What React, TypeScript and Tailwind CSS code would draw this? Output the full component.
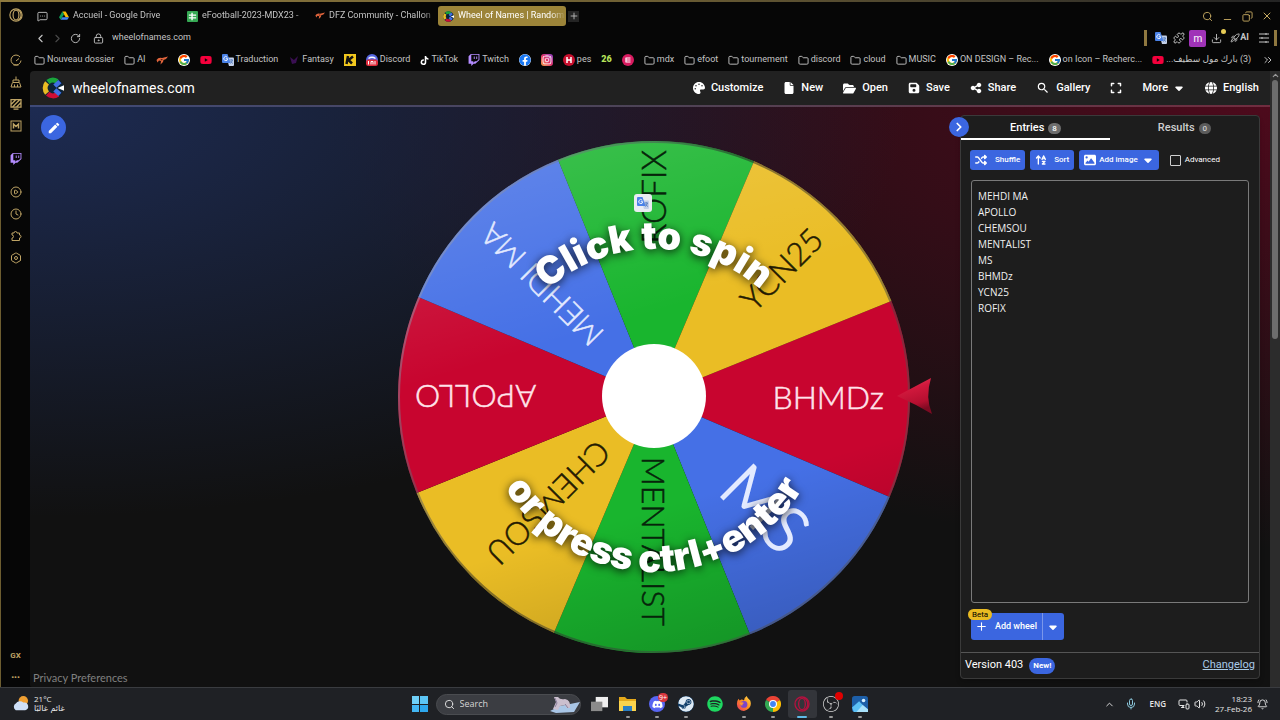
import type { ReactNode } from 'react'
import { FaArrowUpAZ, FaCaretDown, FaExpand, FaFile, FaFloppyDisk, FaFolderOpen, FaGlobe, FaImage, FaPalette, FaShareNodes, FaShuffle } from 'react-icons/fa6'
import { FaDiscord, FaFacebook, FaInstagram, FaSpotify, FaSteam, FaTiktok, FaTwitch, FaYoutube } from 'react-icons/fa'
import { FcGoogle } from 'react-icons/fc'
import { SiObsstudio } from 'react-icons/si'
import { MdEdit, MdSearch } from 'react-icons/md'
import {
  BellRing, ChevronLeft, ChevronRight, ChevronUp, ChevronsRight, CirclePlay, Clock, Copy, Download, Folder, Hexagon,
  LockKeyhole, MessageSquareMore, Mic, Minus, MonitorSmartphone, Plus, Puzzle, Rocket, RotateCw, Search, Volume2, X,
} from 'lucide-react'

const names = ['MEHDI MA', 'APOLLO', 'CHEMSOU', 'MENTALIST', 'MS', 'BHMDz', 'YCN25', 'ROFIX']

interface Slice {
  name: string
  angle: number
  fill: string
  ink: string
  size: number
  end: number
}

const slices: Slice[] = [
  { name: 'BHMDz', angle: 0, fill: '#c8052f', ink: '#ffe4ea', size: 32, end: 230 },
  { name: 'MS', angle: 45, fill: '#4570e6', ink: '#e3eaff', size: 64, end: 204 },
  { name: 'MENTALIST', angle: 90, fill: '#19b52e', ink: '#06240a', size: 32, end: 229 },
  { name: 'CHEMSOU', angle: 135, fill: '#eabd25', ink: '#241b02', size: 32, end: 229 },
  { name: 'APOLLO', angle: 180, fill: '#c8052f', ink: '#ffe4ea', size: 32, end: 239 },
  { name: 'MEHDI MA', angle: 225, fill: '#4570e6', ink: '#e3eaff', size: 31, end: 238 },
  { name: 'ROFIX', angle: 270, fill: '#19b52e', ink: '#06240a', size: 33, end: 247 },
  { name: 'YCN25', angle: 315, fill: '#eabd25', ink: '#241b02', size: 32, end: 231 },
]

function slicePath(angle: number, r: number) {
  const a = ((angle - 22) * Math.PI) / 180
  const b = ((angle + 23) * Math.PI) / 180
  return `M0 0 L${r * Math.cos(a)} ${r * Math.sin(a)} A${r} ${r} 0 0 1 ${r * Math.cos(b)} ${r * Math.sin(b)} Z`
}

function Wheel() {
  return (
    <svg viewBox="-290 -290 580 580" className="block w-[580px] h-[580px]" role="img" aria-label="Wheel">
      <defs>
        <linearGradient id="shade" x1="0.35" y1="0" x2="0.65" y2="1">
          <stop offset="0" stopColor="#fff" stopOpacity="0.14" />
          <stop offset="0.35" stopColor="#fff" stopOpacity="0" />
          <stop offset="0.7" stopColor="#000" stopOpacity="0" />
          <stop offset="1" stopColor="#000" stopOpacity="0.18" />
        </linearGradient>
        <linearGradient id="rim" x1="0" y1="0" x2="1" y2="0.6">
          <stop offset="0" stopColor="#c9d3ee" stopOpacity="0.5" />
          <stop offset="0.5" stopColor="#222" stopOpacity="0.5" />
          <stop offset="1" stopColor="#555" stopOpacity="0.5" />
        </linearGradient>
        <linearGradient id="pointer" x1="0" y1="0" x2="0.3" y2="1">
          <stop offset="0" stopColor="#e8405f" />
          <stop offset="0.4" stopColor="#d0183c" />
          <stop offset="0.8" stopColor="#b50f30" />
          <stop offset="1" stopColor="#7d0a22" />
        </linearGradient>
        <path id="arcTop" d="M-160 12 A160 160 0 0 1 160 12" />
        <path id="arcBottom" d="M-174 1 A174 174 0 0 0 174 1" />
      </defs>

      {slices.map(s => <path key={s.name} d={slicePath(s.angle, 256)} fill={s.fill} />)}
      <circle r="256" fill="url(#shade)" />
      <circle r="255" fill="none" stroke="url(#rim)" strokeWidth="2" />
      {slices.map(s => (
        <text
          key={s.name}
          transform={`rotate(${s.angle})`}
          x={s.end}
          y={s.size * 0.36}
          fontSize={s.size}
          fill={s.ink}
          stroke={s.ink}
          strokeWidth={s.size > 60 ? 2 : 0.5}
          textAnchor="end"
          className="font-['Lato'] font-light"
        >
          {s.name}
        </text>
      ))}
      <circle r="52" cy="-1" fill="#fff" />
      <path d="M243 -1 L277 -19 Q271 0 278 17 L262 8 Z" fill="url(#pointer)" />

      <g className="font-['Inter'] font-black text-[38px] drop-shadow-[0_2px_5px_rgba(0,0,0,0.8)]" fill="#fff" textAnchor="middle">
        <text><textPath href="#arcTop" startOffset="50%">Click to spin</textPath></text>
        <text><textPath href="#arcBottom" startOffset="50%">or press ctrl+enter</textPath></text>
      </g>
    </svg>
  )
}

function OperaRing({ className }: { className?: string }) {
  return (
    <svg viewBox="0 0 24 24" className={className} fill="none" stroke="currentColor" strokeWidth="2">
      <circle cx="12" cy="12" r="10.5" />
      <ellipse cx="12" cy="12" rx="5" ry="8.5" />
      <path d="M15 3 A10 10 0 0 1 15 21" />
    </svg>
  )
}

function WheelLogo({ className }: { className?: string }) {
  return (
    <svg viewBox="0 0 24 24" className={className} fill="none" strokeWidth="5.500">
      <circle cx="12" cy="12" r="11.5" fill="#0c2337" />
      <path d="M6.5 5.5 A8.5 8.5 0 0 1 16.5 4.8" stroke="#1ba53a" />
      <path d="M5.5 17.500 A8.5 8.5 0 0 1 5.5 6.500" stroke="#e8bb22" />
      <path d="M17 19 A8.5 8.5 0 0 1 6.2 18.2" stroke="#cf0d35" />
      <path d="M14 10 L19.500 5 M14 14 L19.500 19" stroke="#3f6fe4" strokeWidth="5" />
      <path d="M17 12 L24 9 V15 Z" fill="#fff" />
    </svg>
  )
}

function Drive({ className }: { className?: string }) {
  return (
    <svg viewBox="0 0 24 22" className={className}>
      <path d="M8 1 h8 l8 14 h-8 z" fill="#fbbc05" />
      <path d="M8 1 L0 15 l4 6 8 -13 z" fill="#0f9d58" />
      <path d="M8 15 h16 l-4 6 H4 z" fill="#4285f4" />
    </svg>
  )
}

function Sheet({ className }: { className?: string }) {
  return (
    <svg viewBox="0 0 24 24" className={className}>
      <rect width="24" height="24" rx="2" fill="#35a853" />
      <path d="M4 9 H20 M4 15 H20 M11 4 V20" stroke="#fff" strokeWidth="3" />
    </svg>
  )
}

function Dfz({ className }: { className?: string }) {
  return (
    <svg viewBox="0 0 24 18" className={className}>
      <path d="M1 8 Q5 2 12 4 L24 1 Q21 7 15 8 L14 12 L9 17 L10 10 L6 9 L3 13 Z" fill="#e0643c" />
      <path d="M9 6 l5 1 -3 2z" fill="#3a150a" />
    </svg>
  )
}

function Translate({ className }: { className?: string }) {
  return (
    <svg viewBox="0 0 24 24" className={className}>
      <path d="M9 7 h13 a2 2 0 0 1 2 2 v13 a2 2 0 0 1 -2 2 h-8 z" fill="#c3d0e8" />
      <path d="M2 0 h9 l6 18 h-15 a2 2 0 0 1 -2 -2 v-14 a2 2 0 0 1 2 -2" fill="#4a82e8" />
      <path d="M10.5 6.5 a4 4 0 1 0 1 3 h-4" stroke="#fff" strokeWidth="1.8" fill="none" />
      <path d="M15 12 h7 M18.5 10.500 v2 M21 12 q-1 5 -5 7 M17 14 q2 4 5 5" stroke="#4470b8" strokeWidth="1.5" fill="none" />
    </svg>
  )
}

function Kick() {
  return (
    <svg viewBox="0 0 24 24" className="size-3">
      <rect width="24" height="24" fill="#f2c81e" />
      <path d="M8 4 L5 20 M18 5 L9 12 L16 19" stroke="#111" strokeWidth="5" fill="none" />
    </svg>
  )
}

function DiscordMark() {
  return (
    <svg viewBox="0 0 24 24" className="size-3">
      <circle cx="12" cy="12" r="12" fill="#5566e0" />
      <path d="M5 9 q7 -5 14 0" stroke="#fff" strokeWidth="3" fill="none" />
      <rect y="11" width="24" height="13" rx="5" fill="#e02d3c" />
      <path d="M5 14 v7 M10 21 v-6 h4 v6 M18 14 v7" stroke="#fff" strokeWidth="2" fill="none" />
    </svg>
  )
}

function Insta() {
  return <span className="grid size-3 place-items-center rounded-[3px] bg-linear-to-tr from-[#f7a03c] via-[#e0306c] to-[#8a3ac8] text-white"><FaInstagram className="size-[10px]" /></span>
}

function Dot({ bg, children }: { bg: string; children: ReactNode }) {
  return (
    <svg viewBox="0 0 24 24" className="size-3" fill="none" stroke="#fff" strokeWidth="3">
      <circle cx="12" cy="12" r="12" fill={bg} stroke="none" />
      {children}
    </svg>
  )
}

const folder = <Folder className="size-[11px] text-[#c9c9c9]" strokeWidth={2} />
const youtube = <FaYoutube className="size-3 text-[#f5003c]" />

const bookmarks: { icon: ReactNode; label?: string; title?: string }[] = [
  { icon: folder, label: 'Nouveau dossier' },
  { icon: folder, label: 'AI' },
  { icon: <Dfz className="w-3" />, title: 'DFZ' },
  { icon: <FcGoogle className="size-3 rounded-full bg-white" />, title: 'Google' },
  { icon: youtube, title: 'YouTube' },
  { icon: <Translate className="size-3" />, label: 'Traduction' },
  { icon: <svg viewBox="0 0 12 12" className="size-3"><path d="M2 3 L6 6 L10 2 L8 9 L4 10 Z" fill="#3a0f52" /></svg>, label: 'Fantasy' },
  { icon: <Kick />, title: 'Kick' },
  { icon: <DiscordMark />, label: 'Discord' },
  { icon: <FaTiktok className="size-[9px] text-white" />, label: 'TikTok' },
  { icon: <FaTwitch className="size-3 text-[#b48cff]" />, label: 'Twitch' },
  { icon: <FaFacebook className="size-3 rounded-full bg-white text-[#1877f2]" />, title: 'Facebook' },
  { icon: <Insta />, title: 'Instagram' },
  { icon: <Dot bg="#c8102e"><path d="M8 6 V18 M16 6 V18 M8 12 H16" /></Dot>, label: 'pes' },
  { icon: <span className="text-[9px] font-black text-[#b6e35a]">26</span>, title: '26' },
  { icon: <Dot bg="#d81b60"><path d="M7 8 H17 M7 12 H17 M7 16 H17 M8 8 V16" strokeWidth="2" /></Dot>, title: 'eFootball' },
  { icon: folder, label: 'mdx' },
  { icon: folder, label: 'efoot' },
  { icon: folder, label: 'tournement' },
  { icon: folder, label: 'discord' },
  { icon: folder, label: 'cloud' },
  { icon: folder, label: 'MUSIC' },
  { icon: <FcGoogle className="size-3 rounded-full bg-white" />, label: 'ON DESIGN – Rec...' },
  { icon: <FcGoogle className="size-3 rounded-full bg-white" />, label: 'on Icon – Recherc...' },
  { icon: youtube, label: '(3) بارك مول سطيف...' },
]

function Sidebar() {
  return (
    <nav aria-label="Browser sidebar" className="flex w-[30px] shrink-0 flex-col items-center border-l border-[#6d5d30] bg-[#060606] text-[#bfa465]">
      <button aria-label="Opera" className="mt-2 mb-8"><OperaRing className="size-[14px]" /></button>
      <div className="flex flex-col items-center gap-[10px]">
        <button aria-label="Speed">
          <svg viewBox="0 0 24 24" className="size-3" fill="none" stroke="currentColor" strokeWidth="2"><path d="M20 6 A10 10 0 1 0 22 13 M12 14 L18 9 M7 22 H17" /></svg>
        </button>
        <button aria-label="Cleaner">
          <svg viewBox="0 0 24 24" className="size-3" fill="none" stroke="currentColor" strokeWidth="2"><path d="M12 1 V8 M6 8 H18 V13 H6 Z M5 13 L2 22 H22 L19 13 M9 17 V22 M15 17 V22" /></svg>
        </button>
        <button aria-label="Wallpapers">
          <svg viewBox="0 0 24 24" className="size-3" fill="none" stroke="currentColor" strokeWidth="2.500"><path d="M2 3 H22 V18 H2 Z M3 12 L12 3 M5 18 L20 3 M13 18 L22 9 M7 22 H17" /></svg>
        </button>
        <button aria-label="Mods">
          <svg viewBox="0 0 24 24" className="size-3" fill="none" stroke="currentColor" strokeWidth="2"><rect x="2" y="2" width="20" height="20" /><path d="M7 17 V8 L12 13 L17 8 V17" strokeWidth="3" /></svg>
        </button>
      </div>
      <button aria-label="Twitch" className="my-[21px] text-[#b48cff]"><FaTwitch className="size-3" /></button>
      <div className="flex flex-col items-center gap-[10px]">
        <button aria-label="Player"><CirclePlay className="size-3" /></button>
        <button aria-label="History"><Clock className="size-3" /></button>
        <button aria-label="Extensions">
          <svg viewBox="0 0 24 24" className="size-3" fill="none" stroke="currentColor" strokeWidth="2"><path d="M4 6 H8 A3 3 0 1 1 14 6 H19 V10 A3 3 0 1 1 19 16 V21 H4 V16 A3 3 0 0 0 4 10 Z" /></svg>
        </button>
        <button aria-label="Settings" className="relative">
          <Hexagon className="size-3" />
          <span className="absolute inset-1 rounded-full border border-[#bfa465]" />
        </button>
      </div>
      <button aria-label="GX" className="mt-auto text-[8px] leading-3 font-bold">GX</button>
      <button aria-label="More" className="mt-[10px] mb-[3px] text-[8px] leading-3 font-bold">•••</button>
    </nav>
  )
}

function Tab({ icon, label }: { icon: ReactNode; label: string }) {
  return (
    <button className="flex h-5 w-32 items-center gap-1 pl-[5px] text-left whitespace-nowrap text-[#c4c4c4]">
      {icon}
      <span className="flex-1 mask-r-from-85%">{label}</span>
    </button>
  )
}

function BrowserChrome() {
  return (
    <header className="pt-[5px] text-[9px] text-[#c4c4c4]">
      <div className="flex h-[22px] items-center">
        <button aria-label="Tabs" className="grid w-6 place-items-center"><MessageSquareMore className="size-[11px]" /></button>
        <div className="flex items-center">
          <Tab icon={<Drive className="w-[10px]" />} label="Accueil - Google Drive" />
          <Tab icon={<Sheet className="size-[11px]" />} label="eFootball-2023-MDX23 -" />
          <Tab icon={<Dfz className="w-[10px]" />} label="DFZ Community - Challon" />
          <button className="flex h-5 w-32 items-center gap-1 rounded-[3px] bg-[#9c8439] pl-[5px] text-left whitespace-nowrap text-white">
            <WheelLogo className="size-[11px]" />
            <span className="flex-1 mask-r-from-85%">Wheel of Names | Random</span>
          </button>
        </div>
        <button aria-label="New tab" className="ml-[2px] grid size-[11px] place-items-center bg-[#242424]"><Plus className="size-[10px]" /></button>
        <div className="ml-auto flex pr-[3px] text-[#c7ab62]">
          <button aria-label="Search tabs" className="grid w-5 place-items-center"><Search className="size-[11px]" /></button>
          <button aria-label="Minimize" className="grid w-5 place-items-center pt-[6px]"><Minus className="size-[11px]" /></button>
          <button aria-label="Restore" className="grid w-5 place-items-center"><Copy className="size-[11px] rotate-90" /></button>
          <button aria-label="Close" className="grid w-5 place-items-center"><X className="size-3" /></button>
        </div>
      </div>

      <div className="flex h-[22px] items-center pl-1">
        <button aria-label="Back"><ChevronLeft className="size-[13px]" /></button>
        <button aria-label="Forward" className="ml-1 text-[#4a4a4a]"><ChevronRight className="size-[13px]" /></button>
        <button aria-label="Reload" className="ml-[6px]"><RotateCw className="size-[11px]" /></button>
        <LockKeyhole className="ml-3 size-[11px]" />
        <input aria-label="Address" defaultValue="wheelofnames.com" className="ml-2 min-w-0 flex-1 bg-transparent text-[9px] outline-none" />
        <span className="h-4 w-[3px] bg-[#8f7840]" />
        <div className="flex items-center pl-2">
          <button aria-label="Translate" className="mr-[6px]"><Translate className="size-3" /></button>
          <button aria-label="Extensions" className="mr-1"><Puzzle className="size-3" /></button>
          <button aria-label="Profile" className="mr-[5px] grid h-[17px] w-[17px] place-items-center rounded-[2px] bg-[#a033b8] text-[10px] text-white">m</button>
          <button aria-label="Downloads" className="relative mr-2">
            <Download className="size-[11px]" />
            <span className="absolute -top-1 -right-1 size-[5px] rounded-full bg-[#e6cb55]" />
          </button>
          <button className="mr-[9px] flex items-center font-bold"><Rocket className="size-[10px]" />AI</button>
          <button aria-label="Easy setup">
            <svg viewBox="0 0 24 24" className="size-3" fill="none" stroke="currentColor" strokeWidth="2"><path d="M2 4 H22 M2 12 H22 M2 20 H22 M16 2 V6 M8 10 V14 M16 18 V22" /></svg>
          </button>
        </div>
        <span className="mr-[3px] ml-1 h-4 w-[3px] bg-[#8f7840]" />
      </div>

      <div className="flex h-[22px] items-center pr-[6px] pl-1">
        <nav aria-label="Bookmarks" className="flex flex-1 items-center gap-[10px]">
          {bookmarks.map((b, i) => (
            <a key={i} href="#" aria-label={b.title} className="flex shrink-0 items-center gap-[2px] whitespace-nowrap">
              {b.icon}
              {b.label && <span dir="auto" className="font-['Roboto','DejaVu_Sans',sans-serif]">{b.label}</span>}
            </a>
          ))}
        </nav>
        <button aria-label="More bookmarks"><ChevronsRight className="size-3" /></button>
      </div>
    </header>
  )
}

function SiteHeader() {
  const item = 'flex items-center gap-[6px]'
  return (
    <header className="flex h-[34px] items-center rounded-tl-[4px] bg-[#212121] pr-[11px] pl-3 text-white">
      <a href="#" className="flex items-center gap-2 text-[14px]"><WheelLogo className="size-[22px]" />wheelofnames.com</a>
      <nav className="ml-auto flex items-center gap-5 text-[11px] font-medium">
        <button className={item}><FaPalette className="size-3" />Customize</button>
        <button className={item}><FaFile className="size-3" />New</button>
        <button className={item}><FaFolderOpen className="size-[13px]" />Open</button>
        <button className={item}><FaFloppyDisk className="size-3" />Save</button>
        <button className={item}><FaShareNodes className="size-3" />Share</button>
        <button className={item}><MdSearch className="size-[14px]" />Gallery</button>
        <button aria-label="Fullscreen"><FaExpand className="size-3" /></button>
        <button className="flex items-center gap-[5px]">More<FaCaretDown className="size-3" /></button>
        <button className={item}><FaGlobe className="size-3" />English</button>
      </nav>
    </header>
  )
}

function EntriesPanel() {
  const button = 'flex h-5 items-center rounded-[3px] bg-[#3b66e0] text-[8px] font-medium'
  return (
    <aside className="relative my-2 mr-[10px] flex flex-col rounded-[4px] border border-[#3a3a3a] bg-[#1d1d1d] text-white shadow-md">
      <button aria-label="Hide panel" className="absolute top-px -left-3 grid size-5 place-items-center rounded-full bg-[#3b66e0]"><ChevronRight className="size-[14px]" strokeWidth={3} /></button>
      <div role="tablist" className="grid grid-cols-2 text-[11px] font-medium">
        <button role="tab" aria-selected="true" className="flex h-6 items-center justify-center gap-1 border-b-2 border-white pt-[2px]">
          Entries <span className="rounded-full bg-[#6e6e6e] px-[4px] text-[8px] leading-[11px]">8</span>
        </button>
        <button role="tab" aria-selected="false" className="flex h-6 items-center justify-center gap-1 border-b-2 border-transparent pt-[2px] text-[#cfcfcf]">
          Results <span className="rounded-full bg-[#5c5c5c] px-[4px] text-[8px] leading-[11px]">0</span>
        </button>
      </div>

      <div className="flex items-center gap-[5px] px-[9px] pt-[10px]">
        <button className={button + ' gap-2 px-[5px]'}><FaShuffle className="size-3" />Shuffle</button>
        <button className={button + ' gap-[7px] px-[5px]'}><FaArrowUpAZ className="size-3" />Sort</button>
        <button className={button + ' gap-[3px] px-[5px]'}><FaImage className="size-3" />Add image<FaCaretDown className="ml-px size-3" /></button>
        <label className="ml-[6px] flex items-center gap-1 text-[8px]">
          <input type="checkbox" className="size-[11px] appearance-none rounded-[1px] border border-[#d0d0d0]" />Advanced
        </label>
      </div>

      <textarea
        aria-label="Entries"
        defaultValue={names.join('\n')}
        className="mx-[10px] mt-[10px] flex-1 resize-none rounded-[3px] border border-[#7a7a7a] bg-transparent px-[6px] py-[7px] font-['Open_Sans'] text-[10px] leading-4 text-[#f0f0f0] outline-none"
      />

      <div className="relative mx-[10px] mt-[10px] mb-3 flex">
        <button className="flex h-[27px] items-center gap-[7px] rounded-l-[3px] bg-[#3b66e0] pr-[5px] pl-1 text-[9px] font-medium"><Plus className="size-[13px]" />Add wheel</button>
        <button aria-label="More options" className="grid w-[22px] place-items-center rounded-r-[3px] border-l border-[#7b97ea] bg-[#3b66e0]"><FaCaretDown className="size-3" /></button>
        <span className="absolute -top-1 -left-[3px] rounded-full bg-[#eabb22] px-1 text-[8px] leading-[11px] text-black">Beta</span>
      </div>

      <footer className="flex h-[26px] items-center gap-[6px] border-t border-[#555] px-[4px] text-[11px]">
        Version 403
        <span className="rounded-full bg-[#3b66e0] px-1 text-[8px] leading-4 font-bold">New!</span>
        <a href="#" className="ml-auto text-[#a9cbe8] underline">Changelog</a>
      </footer>
    </aside>
  )
}

function Site() {
  return (
    <main className="flex min-h-0 flex-1 bg-[#060606]">
      <div className="flex min-w-0 flex-1 flex-col">
        <SiteHeader />
        <div className="h-[2px] bg-linear-to-r from-[#3f4a78] via-[#4d4356] to-[#702c3f]" />
        <section className="grid min-h-0 flex-1 grid-cols-[317px_1fr_310px] rounded-bl-[2px] bg-[#111111] bg-[radial-gradient(ellipse_at_top_left,#1d2b52,transparent_50%),radial-gradient(ellipse_at_top_right,#4d0a1c,transparent_54%)]">
          <div className="flex flex-col items-start justify-between pt-2 pb-[2px] pl-[3px]">
            <button aria-label="Edit title" className="ml-2 grid size-[25px] place-items-center rounded-full bg-[#3b66e0] text-white"><MdEdit className="size-[14px]" /></button>
            <a href="#" className="font-['Lato'] text-[11px] leading-[14px] text-[#808080]">Privacy Preferences</a>
          </div>
          <div className="flex min-w-0 items-center justify-center">
            <div className="relative shrink-0">
              <Wheel />
              <button aria-label="Translate" className="absolute top-[87px] left-[270px] grid size-[18px] place-items-center rounded-[3px] bg-[#e9ecf2]"><Translate className="size-3" /></button>
            </div>
          </div>
          <EntriesPanel />
        </section>
      </div>
      <div className="flex w-[10px] flex-col items-center bg-[#2c2c2c] text-[#9a9a9a]">
        <ChevronUp className="size-[9px]" strokeWidth={3} />
        <span className="h-[42%] w-[6px] rounded-full bg-[#6d6d6d]" />
      </div>
    </main>
  )
}

function ExplorerIcon() {
  return (
    <svg viewBox="0 0 18 18" className="size-[18px]">
      <path d="M0 2 h6 l2 2 h9 v12 h-17 z" fill="#e5a91b" />
      <path d="M0 6 h17 v10 h-17 z" fill="#fbd34d" />
      <path d="M4 11 h9 v5 h-9 z" fill="#2b7fc4" />
    </svg>
  )
}

function FirefoxIcon() {
  return (
    <svg viewBox="0 0 18 18" className="size-4">
      <defs>
        <linearGradient id="fox" x1="1" y1="0" x2="0" y2="1"><stop offset="0" stopColor="#ffe14a" /><stop offset="0.5" stopColor="#ff8a1e" /><stop offset="1" stopColor="#e6306a" /></linearGradient>
      </defs>
      <path d="M9 17 A8 8 0 0 1 1 9 Q1 5 3 3 L4 5 L6 4 Q8 4 9 5 Q9 2 12 0 Q13 3 16 5 Q19 14 9 17" fill="url(#fox)" />
      <circle cx="9" cy="9.500" r="3.800" fill="#7b45c9" />
      <path d="M4 8 Q7 6 9 8 Q7 9 7 11 Q5 11 4 8" fill="#ff9a2e" />
    </svg>
  )
}

function ChromeIcon() {
  return (
    <svg viewBox="-9 -9 18 18" className="size-4">
      <path d="M0 0 L-7.800 -4.500 A9 9 0 0 1 7.800 -4.500 Z" fill="#ea4335" />
      <path d="M0 0 L7.800 -4.500 A9 9 0 0 1 0 9 Z" fill="#fbbc05" />
      <path d="M0 0 L0 9 A9 9 0 0 1 -7.800 -4.500 Z" fill="#34a853" />
      <circle r="4.500" fill="#fff" />
      <circle r="3.300" fill="#4285f4" />
    </svg>
  )
}

function PhotosIcon() {
  return (
    <svg viewBox="0 0 18 18" className="size-4">
      <rect width="18" height="18" rx="3" fill="#1d5fa8" />
      <path d="M0 13 L8 6 L18 16 V18 H2 Z" fill="#5cc0f4" />
      <path d="M5 18 L12 10 L18 15 V18 Z" fill="#a9e2fb" />
      <circle cx="13" cy="5" r="2" fill="#d8f1ff" />
    </svg>
  )
}

const apps: { name: string; icon: ReactNode; state?: 'open' | 'active' }[] = [
  { name: 'Task view', icon: <svg viewBox="0 0 18 18" className="size-[17px]"><rect x="5" y="1" width="13" height="11" fill="#eee" /><rect y="6" width="12" height="10" fill="#8b8b8b" /></svg> },
  { name: 'Explorer', icon: <ExplorerIcon />, state: 'open' },
  {
    name: 'Discord',
    icon: (
      <span className="relative grid size-4 place-items-center rounded-full bg-[#5865f2]">
        <FaDiscord className="size-[11px] text-white" />
        <span className="absolute -top-[3px] -right-[3px] rounded-full bg-[#d9363e] px-px text-[7px] leading-[9px] text-white">9+</span>
      </span>
    ),
    state: 'open',
  },
  { name: 'Steam', icon: <FaSteam className="size-4 rounded-full bg-[#12406c] text-[#dfeaf4]" />, state: 'open' },
  { name: 'Spotify', icon: <FaSpotify className="size-4 text-[#1ed760]" /> },
  { name: 'Firefox', icon: <FirefoxIcon />, state: 'open' },
  { name: 'Chrome', icon: <ChromeIcon />, state: 'open' },
  { name: 'Opera GX', icon: <OperaRing className="size-4 text-[#b3123f]" />, state: 'active' },
  {
    name: 'OBS',
    icon: <span className="relative"><SiObsstudio className="size-4 text-[#d8d8d8]" /><span className="absolute -top-1 -right-1 size-2 rounded-full bg-[#e00000]" /></span>,
    state: 'open',
  },
  { name: 'Photos', icon: <PhotosIcon />, state: 'open' },
]

function Taskbar() {
  return (
    <footer className="grid h-[33px] shrink-0 grid-cols-[1fr_auto_1fr] items-center border-t border-[#3a3c40] bg-[#1f2125] font-['Open_Sans'] text-[#e6e6e6]">
      <button className="flex items-center gap-[5px] pl-3 text-left text-[8px] leading-[10px]">
        <svg viewBox="0 0 18 16" className="w-[17px]">
          <circle cx="12" cy="5" r="5" fill="#f0a033" />
          <path d="M4 15 A4 4 0 0 1 4 8 A5 5 0 0 1 12 7 A4 4 0 1 1 14 15 Z" fill="#cfe0f8" />
        </svg>
        <span>
          <span className="block">21°C</span>
          <span className="block font-['DejaVu_Sans',sans-serif]">غائم غالبًا</span>
        </span>
      </button>

      <div className="flex items-center pl-[6px]">
        <button aria-label="Start" className="mr-2 grid size-4 grid-cols-2 gap-px">
          <span className="bg-[#6fd0f8]" /><span className="bg-[#5cc6f6]" /><span className="bg-[#43b6f2]" /><span className="bg-[#2ea8ee]" />
        </button>
        <label className="mr-1 flex h-[21px] w-[145px] items-center gap-[5px] rounded-full border border-[#4a4c50] bg-[#3b3d42] pl-[7px]">
          <Search className="size-[11px] shrink-0" />
          <input placeholder="Search" aria-label="Search" className="min-w-0 flex-1 bg-transparent text-[9px] outline-none placeholder:text-[#d5d5d5]" />
          <svg viewBox="0 0 30 18" className="h-[18px] w-[30px] shrink-0">
            <path d="M0 16 L10 11 L30 7 L24 17 L6 18 Z" fill="#a9c6e6" />
            <path d="M3 14 L6 7 L4 2 L8 2 Q10 5 15 4 Q21 5 20 13 L17 13 L15 10 L10 11 L8 15 Z" fill="#cbbfce" />
            <path d="M5 3 L7 8 L5 12 M15 9 L18 13" stroke="#8c7f9c" fill="none" />
          </svg>
        </label>
        {apps.map(app => (
          <button
            key={app.name}
            aria-label={app.name}
            className={`relative grid h-7 w-[29px] place-items-center rounded-[3px] ${app.state === 'active' ? 'bg-[#33353a]' : ''}`}
          >
            {app.icon}
            {app.state === 'open' && <span className="absolute bottom-0 h-[2px] w-1 rounded-full bg-[#9a9a9a]" />}
            {app.state === 'active' && <span className="absolute bottom-0 h-[2px] w-[10px] rounded-full bg-[#5fbbe8]" />}
          </button>
        ))}
      </div>

      <div className="flex items-center justify-end pr-3 text-[9px]">
        <button aria-label="Hidden icons" className="mr-[10px]"><ChevronUp className="size-[11px]" /></button>
        <button aria-label="Microphone" className="mr-3 text-[#8cc8dc]"><Mic className="size-3" /></button>
        <button className="mr-3 text-[8px] font-semibold">ENG</button>
        <button aria-label="Network" className="mr-1"><MonitorSmartphone className="size-3" /></button>
        <button aria-label="Volume" className="mr-[9px]"><Volume2 className="size-3" /></button>
        <button className="mr-[5px] text-right text-[8px] leading-[10px]">18:23<br />27-Feb-26</button>
        <button aria-label="Notifications"><BellRing className="size-[11px]" /></button>
      </div>
    </footer>
  )
}

export default function App() {
  return (
    <div className="flex h-screen w-full flex-col overflow-hidden bg-[#060606] font-['Roboto',sans-serif] leading-normal">
      <div className="relative flex min-h-0 flex-1">
        <div className="absolute inset-x-0 top-0 h-[2px] bg-linear-to-r from-[#8f7a3e] via-[#6e5f33] to-[#242424]" />
        <Sidebar />
        <div className="flex min-w-0 flex-1 flex-col">
          <BrowserChrome />
          <Site />
        </div>
      </div>
      <Taskbar />
    </div>
  )
}
